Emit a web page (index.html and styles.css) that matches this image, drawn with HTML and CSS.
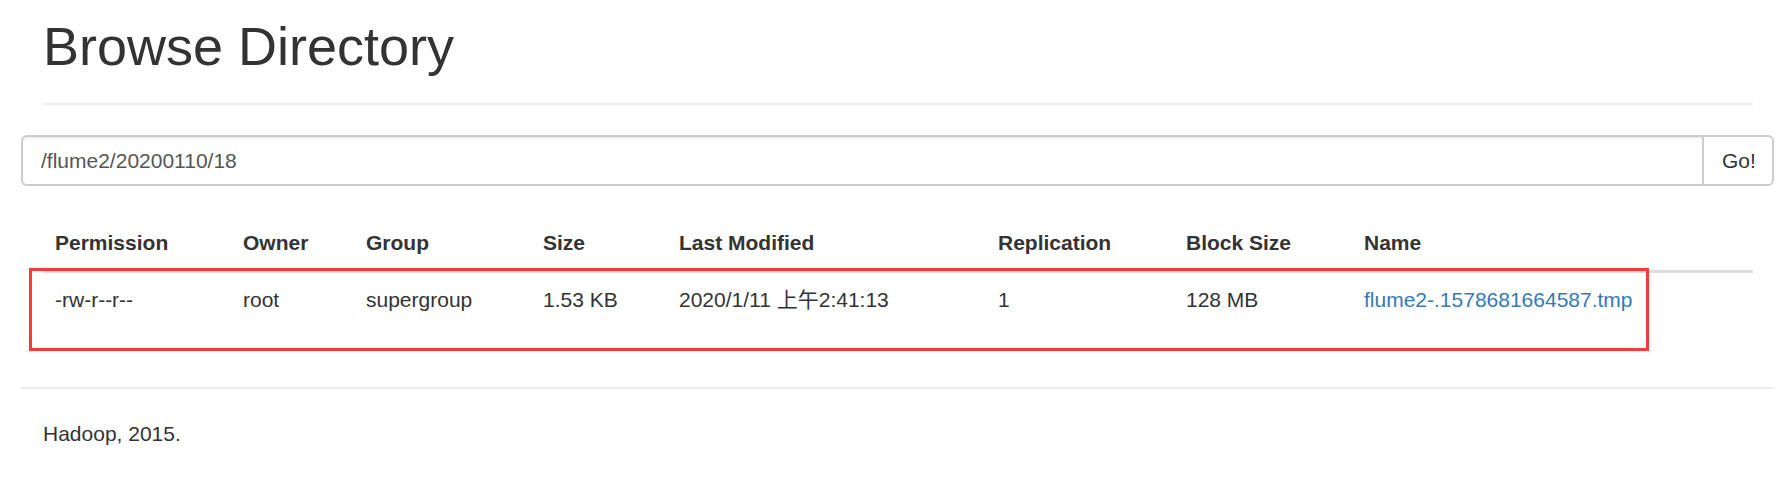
FILE: index.html
```html
<!DOCTYPE html>
<html lang="en">
<head>
<meta charset="utf-8">
<title>Browsing HDFS</title>
<link rel="stylesheet" href="styles.css">
</head>
<body>
<div class="container">
  <div class="page-header">
    <h1>Browse Directory</h1>
  </div>

  <div class="row">
    <form class="nav-form">
      <div class="input-group">
        <input class="form-control" type="text" value="/flume2/20200110/18">
        <button class="btn" type="button">Go!</button>
      </div>
    </form>
  </div>

  <div class="spacer"></div>

  <div class="panel">
    <table class="table">
      <colgroup>
        <col class="c-perm">
        <col class="c-owner">
        <col class="c-group">
        <col class="c-size">
        <col class="c-mod">
        <col class="c-rep">
        <col class="c-block">
        <col class="c-name">
      </colgroup>
      <thead>
        <tr>
          <th>Permission</th>
          <th>Owner</th>
          <th>Group</th>
          <th>Size</th>
          <th>Last Modified</th>
          <th>Replication</th>
          <th>Block Size</th>
          <th>Name</th>
        </tr>
      </thead>
      <tbody>
        <tr>
          <td>-rw-r--r--</td>
          <td>root</td>
          <td>supergroup</td>
          <td>1.53 KB</td>
          <td>2020/1/11 上午2:41:13</td>
          <td>1</td>
          <td>128 MB</td>
          <td><a href="#">flume2-.1578681664587.tmp</a></td>
        </tr>
      </tbody>
    </table>
    <div class="highlight"></div>
  </div>

  <div class="row footer">
    <hr>
    <p>Hadoop, 2015.</p>
  </div>
</div>
</body>
</html>
```

FILE: styles.css
```css
html, body {
  margin: 0;
  padding: 0;
  background: #fff;
}

body {
  font-family: "Liberation Sans", Arial, "Noto Sans CJK SC", sans-serif;
  font-size: 21px;
  line-height: 30px;
  color: #333;
}

.container {
  margin-left: 21px;
  width: 1753px;
}

.page-header {
  margin: 0 21px 30px 22px;
  padding-bottom: 12px;
  border-bottom: 2px solid #eee;
}

.page-header h1 {
  margin: 17px 0 15px;
  font-size: 54px;
  line-height: 59.4px;
  font-weight: 400;
  color: #333;
}

.row {
  width: 1753px;
  display: flow-root;
}

.nav-form {
  margin: 0;
}

.input-group {
  display: flex;
  height: 51px;
}

.form-control {
  flex: 1;
  box-sizing: border-box;
  height: 51px;
  margin: 0;
  padding: 0 18px;
  border: 2px solid #ccc;
  border-right: 0;
  border-radius: 6px 0 0 6px;
  box-shadow: inset 0 1.5px 1.5px rgba(0, 0, 0, .075);
  font-family: "Liberation Sans", Arial, sans-serif;
  font-size: 21px;
  color: #555;
  background: #fff;
  outline: none;
}

.btn {
  box-sizing: border-box;
  width: 72px;
  height: 51px;
  margin: 0;
  padding: 0 18px;
  border: 2px solid #ccc;
  border-radius: 0 6px 6px 0;
  background: #fff;
  font-family: "Liberation Sans", Arial, sans-serif;
  font-size: 21px;
  color: #333;
  cursor: pointer;
}

.spacer {
  height: 30px;
}

.panel {
  position: relative;
  margin: 0 21px 0 22px;
}

.table {
  width: 1710px;
  table-layout: fixed;
  border-collapse: separate;
  border-spacing: 0;
  margin: 0 0 30px;
}

.c-perm { width: 188px; }
.c-owner { width: 123px; }
.c-group { width: 177px; }
.c-size { width: 136px; }
.c-mod { width: 319px; }
.c-rep { width: 188px; }
.c-block { width: 178px; }
.c-name { width: 401px; }

.table th,
.table td {
  padding: 12px;
  line-height: 30px;
  text-align: left;
  white-space: nowrap;
}

.table th {
  font-weight: 700;
  vertical-align: bottom;
  border-bottom: 3px solid #ddd;
}

.table td {
  vertical-align: top;
}

.table a {
  color: #337ab7;
  text-decoration: none;
}

.highlight {
  position: absolute;
  left: -14px;
  top: 52px;
  width: 1620px;
  height: 83px;
  box-sizing: border-box;
  border: 3px solid #f23b3b;
  pointer-events: none;
}

.footer hr {
  margin: 30px 0;
  border: 0;
  border-top: 2px solid #eee;
  height: 0;
}

.footer p {
  margin: 0 0 15px;
  padding-left: 22px;
}
```
